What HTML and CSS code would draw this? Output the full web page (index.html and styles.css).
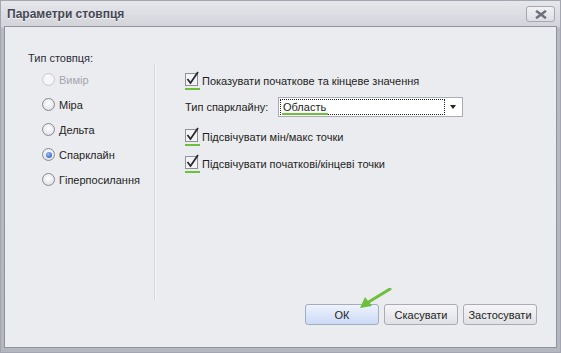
FILE: index.html
```html
<!DOCTYPE html>
<html>
<head>
<meta charset="utf-8">
<link rel="stylesheet" href="styles.css">
</head>
<body>
<div class="window">
  <div class="titlebar">
    <span class="title">Параметри стовпця</span>
    <span class="close"><svg width="12" height="9" viewBox="0 0 12 9"><path d="M2 1.5 L10 7.5 M10 1.5 L2 7.5" stroke="#6c707a" stroke-width="2.4" stroke-linecap="square"/></svg></span>
  </div>
  <div class="body">
    <div class="main">
      <div class="left">
        <div class="heading">Тип стовпця:</div>
        <div class="radio disabled"><span class="rb"></span><span>Вимір</span></div>
        <div class="radio"><span class="rb"></span><span>Міра</span></div>
        <div class="radio"><span class="rb"></span><span>Дельта</span></div>
        <div class="radio"><span class="rb on"></span><span>Спарклайн</span></div>
        <div class="radio"><span class="rb"></span><span>Гіперпосилання</span></div>
      </div>
      <div class="right">
        <div class="check r1"><span class="cb"><svg width="16" height="16" viewBox="0 0 16 16"><rect x="0.5" y="2.5" width="12" height="12" fill="#f4f4f6" stroke="#8c909a"/><path d="M2.5 8 L5.5 12 L13 1" fill="none" stroke="#2a2a30" stroke-width="1.8"/></svg><i class="ul"></i></span><span>Показувати початкове та кінцеве значення</span></div>
        <div class="combo-row">
          <span class="clabel">Тип спарклайну:</span>
          <div class="combo"><span class="focus"><span class="val">Область</span></span><span class="arrow"></span></div>
        </div>
        <div class="check r3"><span class="cb"><svg width="16" height="16" viewBox="0 0 16 16"><rect x="0.5" y="2.5" width="12" height="12" fill="#f4f4f6" stroke="#8c909a"/><path d="M2.5 8 L5.5 12 L13 1" fill="none" stroke="#2a2a30" stroke-width="1.8"/></svg><i class="ul"></i></span><span>Підсвічувати мін/макс точки</span></div>
        <div class="check r4"><span class="cb"><svg width="16" height="16" viewBox="0 0 16 16"><rect x="0.5" y="2.5" width="12" height="12" fill="#f4f4f6" stroke="#8c909a"/><path d="M2.5 8 L5.5 12 L13 1" fill="none" stroke="#2a2a30" stroke-width="1.8"/></svg><i class="ul"></i></span><span>Підсвічувати початкові/кінцеві точки</span></div>
      </div>
    </div>
    <div class="buttons">
      <button class="btn ok">ОК</button>
      <button class="btn">Скасувати</button>
      <button class="btn">Застосувати</button>
      <svg class="pointer" width="34" height="24" viewBox="0 0 34 24"><path d="M32 1 L9 15" stroke="#6cc03c" stroke-width="3" stroke-linecap="round"/><path d="M2 20 L7 9 L14 18 Z" fill="#6cc03c"/></svg>
    </div>
  </div>
</div>
</body>
</html>
```

FILE: styles.css
```css
* { box-sizing: border-box; }
html, body { margin: 0; padding: 0; }
body {
  width: 561px;
  height: 353px;
  overflow: hidden;
  font-family: "Liberation Sans", Arial, sans-serif;
  font-size: 11px;
  color: #1e1e22;
}
.window {
  width: 561px;
  height: 353px;
  display: flex;
  flex-direction: column;
  background: linear-gradient(#e6e7eb 0, #d2d4da 26px, #b7bac3 27px, #b4b7c0 100%);
  border: 1px solid #a3a6b0;
}
.titlebar {
  height: 25px;
  display: flex;
  align-items: center;
  justify-content: space-between;
  padding: 0 5px 0 6px;
}
.title {
  font-weight: bold;
  color: #454853;
  font-size: 12px;
  text-shadow: 0 1px 0 #f6f6f8;
}
.close {
  width: 29px;
  height: 16px;
  border: 1px solid #a5a8b1;
  border-radius: 3px;
  background: linear-gradient(#f2f2f5, #dcdee3);
  display: flex;
  align-items: center;
  justify-content: center;
  margin-top: 1px;
}
.body {
  flex: 1;
  margin: 0 3px 4px 3px;
  border: 1px solid #8f939e;
  background: #ebecf0;
  display: flex;
  flex-direction: column;
}
.main {
  flex: 1;
  display: flex;
}
.left {
  width: 149px;
  padding: 25px 0 0 23px;
}
.heading {
  height: 13px;
  line-height: 13px;
  margin-bottom: 2px;
  color: #2a2c38;
}
.radio {
  height: 25px;
  display: flex;
  align-items: center;
  padding-left: 14px;
  gap: 4px;
}
.radio.disabled { color: #a4a6ac; }
.rb {
  width: 13px;
  height: 13px;
  border-radius: 50%;
  border: 1px solid #868a95;
  background: radial-gradient(circle at 50% 40%, #ffffff 0, #e8e9ee 60%, #cfd1d8 100%);
  display: flex;
  align-items: center;
  justify-content: center;
}
.radio.disabled .rb {
  border-color: #c9cbd1;
  background: radial-gradient(circle at 50% 40%, #fafafb 0, #eeeff2 100%);
}
.rb.on::after {
  content: "";
  width: 6px;
  height: 6px;
  border-radius: 50%;
  background: radial-gradient(circle at 40% 35%, #9fbff0 0, #3f6cc4 70%, #2c58b0 100%);
}
.right {
  flex: 1;
  margin: 36px 0 4px 0;
  border-left: 1px solid #d3d5db;
  box-shadow: inset 1px 0 0 #f7f7f9;
  padding: 10px 0 0 30px;
  position: relative;
}
.check {
  height: 16px;
  display: flex;
  align-items: center;
  white-space: nowrap;
}
.cb {
  width: 16px;
  height: 16px;
  position: relative;
  margin-right: 1px;
  margin-top: -4px;
}
.cb svg { display: block; }
.ul {
  position: absolute;
  left: 0;
  top: 17px;
  width: 15px;
  height: 2px;
  background: #6cc03c;
}
.combo-row {
  display: flex;
  align-items: center;
  margin-top: 8px;
  height: 20px;
  white-space: nowrap;
}
.clabel { width: 93px; }
.combo {
  width: 185px;
  height: 20px;
  border: 1px solid #a9acb5;
  background: #ffffff;
  display: flex;
  align-items: center;
  padding: 1px;
}
.focus {
  flex: 1;
  height: 16px;
  border: 1px dotted #222;
  display: flex;
  align-items: center;
  padding-left: 2px;
}
.val {
  position: relative;
}
.val::after {
  content: "";
  position: absolute;
  left: -1px;
  right: -2px;
  bottom: -2px;
  height: 2px;
  background: #6cc03c;
}
.arrow {
  width: 16px;
  display: flex;
  justify-content: center;
}
.arrow::after {
  content: "";
  border-left: 3.5px solid transparent;
  border-right: 3.5px solid transparent;
  border-top: 4px solid #222;
}
.r3 { margin-top: 12px; }
.r4 { margin-top: 11px; }
.buttons {
  display: flex;
  justify-content: flex-end;
  gap: 5px;
  padding: 0 19px 22px 0;
  position: relative;
}
.btn {
  width: 74px;
  height: 21px;
  border: 1px solid #a9acb5;
  border-radius: 3px;
  background: linear-gradient(#f6f6f8, #dfe0e5);
  font-family: inherit;
  font-size: 11px;
  color: #1e1e22;
  padding: 0;
}
.btn.ok {
  background: linear-gradient(#eef3fd, #cbdaf6);
  border-color: #a4acbf;
}
.pointer {
  position: absolute;
  left: 353px;
  top: -16px;
}
```
